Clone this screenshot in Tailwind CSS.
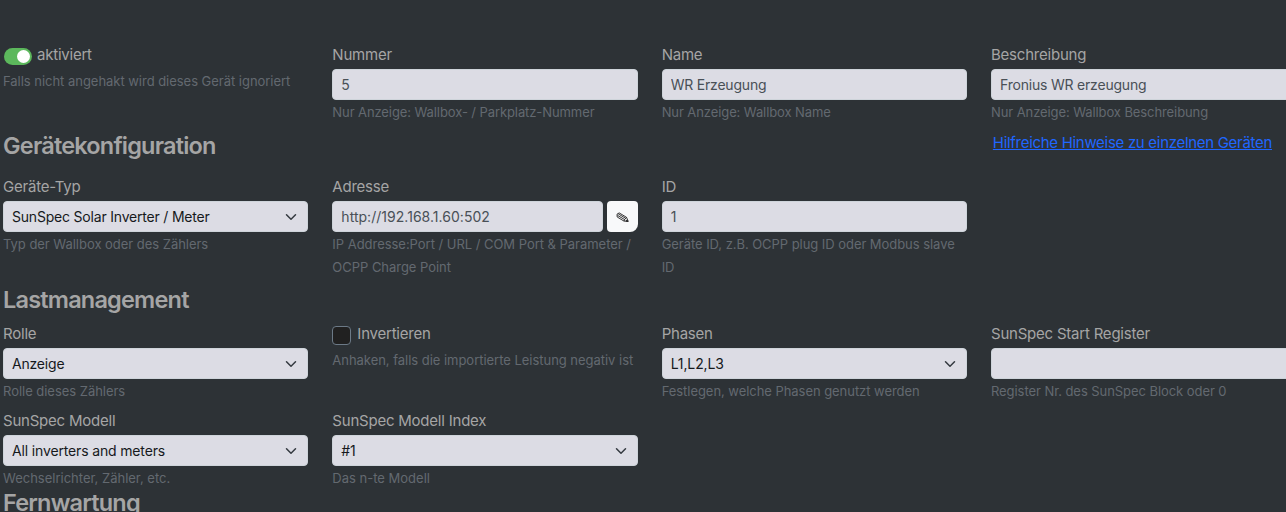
<!DOCTYPE html>
<html lang="de">
<head>
    <meta charset="UTF-8">
    <meta name="viewport" content="width=device-width, initial-scale=1.0">
    <title>Gerätekonfiguration</title>
    <script src="https://cdn.jsdelivr.net/npm/@tailwindcss/browser@4"></script>
</head>
<body class="h-screen overflow-hidden bg-[#2d3236] font-['Inter',sans-serif] text-[15px] tracking-[-0.22px] text-[#a5a5a5]">
    <main class="w-[1297px] pl-[3px] pt-[43px]">
        <!-- Allgemein -->
        <div class="grid h-[81px] w-[1293.33px] grid-cols-4 gap-x-6">
            <div>
                <label class="flex h-[27px] items-start leading-6">
                    <span class="mt-[5px] ml-px mr-[5px] flex h-[17px] w-7 justify-end rounded-full bg-[#5cb85c] p-0.5">
                        <span class="size-[13px] rounded-full bg-white"></span>
                    </span>
                    aktiviert
                </label>
                <p class="text-[13px] leading-[23px] tracking-[-0.03px] text-[#636970]">Falls nicht angehakt wird dieses Gerät ignoriert</p>
            </div>
            <div>
                <label for="nummer" class="block h-[26px] leading-6">Nummer</label>
                <input id="nummer" type="text" value="5" class="block h-[31px] w-full rounded-[4px] border border-[#ced4da] bg-[#dcdce4] px-2 text-[14px] tracking-[-0.2px] text-[#495057]">
                <p class="mt-px text-[13px] leading-[23px] tracking-[-0.09px] text-[#636970]">Nur Anzeige: Wallbox- / Parkplatz-Nummer</p>
            </div>
            <div>
                <label for="name" class="block h-[26px] leading-6">Name</label>
                <input id="name" type="text" value="WR Erzeugung" class="block h-[31px] w-full rounded-[4px] border border-[#ced4da] bg-[#dcdce4] px-2 text-[14px] tracking-[-0.2px] text-[#495057]">
                <p class="mt-px text-[13px] leading-[23px] tracking-[-0.09px] text-[#636970]">Nur Anzeige: Wallbox Name</p>
            </div>
            <div>
                <label for="beschreibung" class="block h-[26px] leading-6">Beschreibung</label>
                <input id="beschreibung" type="text" value="Fronius WR erzeugung" class="block h-[31px] w-full rounded-[4px] border border-[#ced4da] bg-[#dcdce4] px-2 text-[14px] tracking-[-0.2px] text-[#495057]">
                <p class="mt-px text-[13px] leading-[23px] tracking-[-0.09px] text-[#636970]">Nur Anzeige: Wallbox Beschreibung</p>
            </div>
        </div>

        <!-- Gerätekonfiguration -->
        <div class="flex h-[51px] w-[1269px] items-start justify-between">
            <h2 class="pt-[7px] text-[23.5px] font-semibold leading-[30px] tracking-[-0.8px]">Gerätekonfiguration</h2>
            <a href="#" class="pt-[7px] leading-6 tracking-[-0.3px] text-[#1f66ff] underline">Hilfreiche Hinweise zu einzelnen Geräten</a>
        </div>
        <div class="grid h-[104px] w-[1293.33px] grid-cols-4 gap-x-6">
            <div>
                <label for="typ" class="block h-[26px] leading-6">Geräte-Typ</label>
                <div class="grid">
                    <select id="typ" class="col-start-1 row-start-1 h-[31px] w-full appearance-none rounded-[4px] border border-[#ced4da] bg-[#dcdce4] px-2 text-[14px] tracking-[-0.2px] text-[#16191c]">
                        <option>SunSpec Solar Inverter / Meter</option>
                    </select>
                    <svg class="pointer-events-none col-start-1 row-start-1 mr-[11px] size-3 self-center justify-self-end" viewBox="0 0 16 16" fill="none" stroke="#343a40" stroke-width="2" stroke-linecap="round" stroke-linejoin="round"><path d="m2 5 6 6 6-6"/></svg>
                </div>
                <p class="mt-px text-[13px] leading-[23px] tracking-[-0.03px] text-[#636970]">Typ der Wallbox oder des Zählers</p>
            </div>
            <div>
                <label for="adresse" class="block h-[26px] leading-6">Adresse</label>
                <div class="flex gap-1">
                    <input id="adresse" type="text" value="http://192.168.1.60:502" class="block h-[31px] min-w-0 flex-1 rounded-[4px] border border-[#ced4da] bg-[#dcdce4] px-2 text-[14px] tracking-[0.03px] text-[#495057]">
                    <button type="button" class="flex h-[31px] w-[31px] items-center justify-center rounded-[4px] rounded-br-[8px] bg-[#f8f9fa]">
                        <svg class="mt-0.5 h-[11px] w-[13px]" viewBox="0 0 13 11" fill="none" stroke="#222" stroke-width="0.9" stroke-linejoin="round">
                            <path d="M1 2.2 3.2.9l7.3 4.4 1.7 4-4.2-.2L1.2 5z"/>
                            <path d="m1.6 3.4 7.2 4.3M2.3 1.9l7.2 4.3M8 9.1l.6-1.6 1.9-2.2"/>
                            <path d="m10.4 8.2 1.8 1.1-2.1-.1z" fill="#222"/>
                        </svg>
                    </button>
                </div>
                <p class="mt-px text-[13px] leading-[23px] tracking-[-0.03px] text-[#636970]">IP Addresse:Port / URL / COM Port &amp; Parameter /<br>OCPP Charge Point</p>
            </div>
            <div>
                <label for="id" class="block h-[26px] leading-6">ID</label>
                <input id="id" type="text" value="1" class="block h-[31px] w-full rounded-[4px] border border-[#ced4da] bg-[#dcdce4] px-2 text-[14px] tracking-[-0.2px] text-[#495057]">
                <p class="mt-px text-[13px] leading-[23px] tracking-[-0.05px] text-[#636970]">Geräte ID, z.B. OCPP plug ID oder Modbus slave<br>ID</p>
            </div>
        </div>

        <!-- Lastmanagement -->
        <h2 class="h-[43px] pt-[6px] text-[23.5px] font-semibold leading-[30px] tracking-[-0.8px]">Lastmanagement</h2>
        <div class="grid h-[87px] w-[1293.33px] grid-cols-4 gap-x-6">
            <div>
                <label for="rolle" class="block h-[26px] leading-6">Rolle</label>
                <div class="grid">
                    <select id="rolle" class="col-start-1 row-start-1 h-[31px] w-full appearance-none rounded-[4px] border border-[#ced4da] bg-[#dcdce4] px-2 text-[14px] tracking-[-0.2px] text-[#16191c]">
                        <option>Anzeige</option>
                    </select>
                    <svg class="pointer-events-none col-start-1 row-start-1 mr-[11px] size-3 self-center justify-self-end" viewBox="0 0 16 16" fill="none" stroke="#343a40" stroke-width="2" stroke-linecap="round" stroke-linejoin="round"><path d="m2 5 6 6 6-6"/></svg>
                </div>
                <p class="mt-px text-[13px] leading-[23px] tracking-[-0.03px] text-[#636970]">Rolle dieses Zählers</p>
            </div>
            <div>
                <label class="flex h-[27px] items-start leading-6">
                    <input type="checkbox" class="mt-1 mr-[6px] size-[19px] appearance-none rounded-[4px] border border-[#6c7a87] bg-[#212121]">
                    Invertieren
                </label>
                <p class="text-[13px] leading-[23px] tracking-[-0.03px] text-[#636970]">Anhaken, falls die importierte Leistung negativ ist</p>
            </div>
            <div>
                <label for="phasen" class="block h-[26px] leading-6">Phasen</label>
                <div class="grid">
                    <select id="phasen" class="col-start-1 row-start-1 h-[31px] w-full appearance-none rounded-[4px] border border-[#ced4da] bg-[#dcdce4] px-2 text-[14px] tracking-[-0.1px] text-[#16191c]">
                        <option>L1,L2,L3</option>
                    </select>
                    <svg class="pointer-events-none col-start-1 row-start-1 mr-[11px] size-3 self-center justify-self-end" viewBox="0 0 16 16" fill="none" stroke="#343a40" stroke-width="2" stroke-linecap="round" stroke-linejoin="round"><path d="m2 5 6 6 6-6"/></svg>
                </div>
                <p class="mt-px text-[13px] leading-[23px] tracking-[-0.05px] text-[#636970]">Festlegen, welche Phasen genutzt werden</p>
            </div>
            <div>
                <label for="register" class="block h-[26px] leading-6">SunSpec Start Register</label>
                <input id="register" type="text" class="block h-[31px] w-full rounded-[4px] border border-[#ced4da] bg-[#dcdce4] px-2 text-[14px] tracking-[-0.2px] text-[#495057]">
                <p class="mt-px text-[13px] leading-[23px] tracking-[-0.06px] text-[#636970]">Register Nr. des SunSpec Block oder 0</p>
            </div>
        </div>
        <div class="grid h-[81px] w-[1293.33px] grid-cols-4 gap-x-6">
            <div>
                <label for="modell" class="block h-[26px] leading-6">SunSpec Modell</label>
                <div class="grid">
                    <select id="modell" class="col-start-1 row-start-1 h-[31px] w-full appearance-none rounded-[4px] border border-[#ced4da] bg-[#dcdce4] px-2 text-[14px] tracking-[-0.15px] text-[#16191c]">
                        <option>All inverters and meters</option>
                    </select>
                    <svg class="pointer-events-none col-start-1 row-start-1 mr-[11px] size-3 self-center justify-self-end" viewBox="0 0 16 16" fill="none" stroke="#343a40" stroke-width="2" stroke-linecap="round" stroke-linejoin="round"><path d="m2 5 6 6 6-6"/></svg>
                </div>
                <p class="mt-px text-[13px] leading-[23px] text-[#636970] tracking-[0px]">Wechselrichter, Zähler, etc.</p>
            </div>
            <div>
                <label for="index" class="block h-[26px] leading-6">SunSpec Modell Index</label>
                <div class="grid">
                    <select id="index" class="col-start-1 row-start-1 h-[31px] w-full appearance-none rounded-[4px] border border-[#ced4da] bg-[#dcdce4] px-2 text-[14px] tracking-[-0.2px] text-[#16191c]">
                        <option>#1</option>
                    </select>
                    <svg class="pointer-events-none col-start-1 row-start-1 mr-[11px] size-3 self-center justify-self-end" viewBox="0 0 16 16" fill="none" stroke="#343a40" stroke-width="2" stroke-linecap="round" stroke-linejoin="round"><path d="m2 5 6 6 6-6"/></svg>
                </div>
                <p class="mt-px text-[13px] leading-[23px] text-[#636970] tracking-[0px]">Das n-te Modell</p>
            </div>
        </div>

        <!-- Fernwartung -->
        <h2 class="-mt-0.5 text-[23.5px] font-semibold leading-[30px] tracking-[-0.8px]">Fernwartung</h2>
    </main>
</body>
</html>
